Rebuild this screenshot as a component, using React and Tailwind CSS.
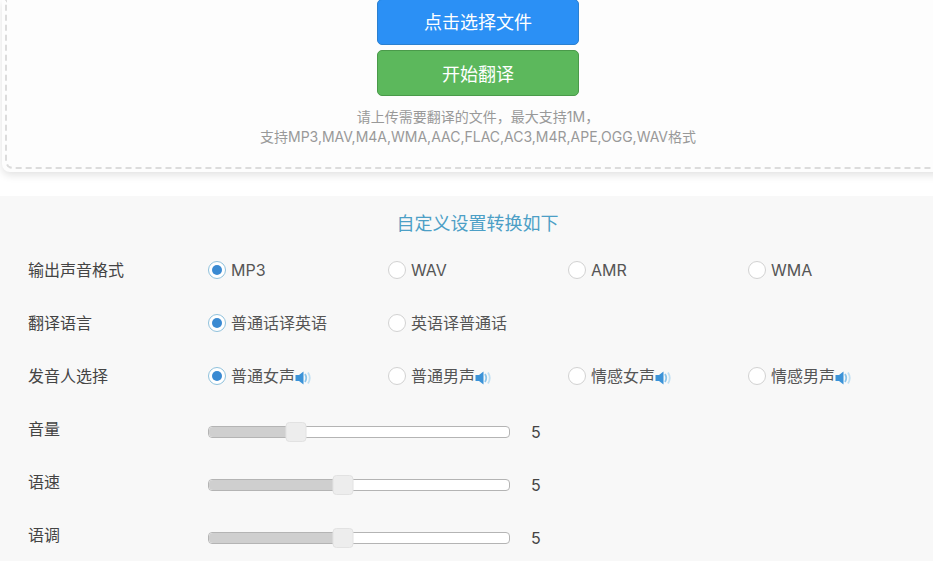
const FONT = "font-['Inter','Noto_Sans_CJK_SC',sans-serif]";

function Speaker() {
  return (
    <svg width="17" height="14" viewBox="0 0 17 14" className="mt-[4px] shrink-0">
      <path d="M0.5 4h3.5l4.5-3.5v13l-4.5-3.5h-3.5z" fill="#3c93d8" />
      <path d="M10 3q2.5 4 0 8" fill="none" stroke="#8cc4e8" strokeWidth="1.8" />
      <path d="M13 1.5q3.5 5.5 0 11" fill="none" stroke="#bfdff2" strokeWidth="1.8" />
    </svg>
  );
}

function Radio({ label, checked, sound }) {
  return (
    <div className="flex items-center">
      <span
        className={
          checked
            ? "flex h-[18px] w-[18px] shrink-0 items-center justify-center rounded-full border border-[#8fc1dc] bg-white"
            : "h-[18px] w-[18px] shrink-0 rounded-full border border-[#d2d2d2] bg-white"
        }
      >
        {checked && <span className="h-[10px] w-[10px] rounded-full bg-[#3a8ad2]" />}
      </span>
      <span className="ml-[5px] text-base leading-6 text-[#555]">{label}</span>
      {sound && <Speaker />}
    </div>
  );
}

function OptionRow({ title, options, sound }) {
  return (
    <div className="flex h-[53px] items-center pl-7">
      <div className="w-[180px] text-base text-[#444]">{title}</div>
      {options.map((opt, i) => (
        <div key={opt} className="w-[180px]">
          <Radio label={opt} checked={i === 0} sound={sound} />
        </div>
      ))}
    </div>
  );
}

function SliderRow({ title, value, percent }) {
  return (
    <div className="flex h-[53px] items-center pl-7 pt-[6px]">
      <div className="mb-[6px] w-[180px] text-base text-[#444]">{title}</div>
      <div className="relative h-3 w-[302px] rounded-[4px] border border-[#b4b4b4] bg-white">
        <div className="h-full rounded-l-[4px] bg-[#cfcfcf]" style={{ width: `${percent}%` }} />
        <div
          className="absolute top-[-5px] h-5 w-[21px] -translate-x-1/2 rounded-[4px] border border-[#e2e2e2] bg-[#ededed]"
          style={{ left: `${percent}%` }}
        />
      </div>
      <span className="ml-[21px] text-base text-[#444]">{value}</span>
    </div>
  );
}

export default function App() {
  return (
    <div className={`h-[561px] w-[933px] overflow-hidden bg-white ${FONT}`}>
      {/* upload card, top is scrolled off */}
      <div className="ml-[2px] h-[172px] w-[952px] rounded-b-lg bg-[#fdfdfd] px-[3px] pb-[3px] shadow-[0_3px_8px_rgba(0,0,0,0.12)]">
        <div className="flex h-full flex-col items-center rounded-b-lg border-x-2 border-b-2 border-dashed border-[#dcdcdc]">
          <button className="-mt-px h-[46px] w-[202px] rounded-[5px] border border-[#2b80d0] bg-[#2b90f5] pt-[2px] text-lg text-white">
            点击选择文件
          </button>
          <button className="mt-[5px] h-[46px] w-[202px] rounded-[5px] border border-[#4a9a4a] bg-[#5cb85c] pt-[3px] text-lg text-white">
            开始翻译
          </button>
          <p className="mt-[11px] text-center text-sm leading-[20px] text-[#999]">
            请上传需要翻译的文件，最大支持1M，
            <br />
            支持MP3,MAV,M4A,WMA,AAC,FLAC,AC3,M4R,APE,OGG,WAV格式
          </p>
        </div>
      </div>

      <div className="mt-6 h-[365px] bg-[#f8f8f8]">
        <h2 className="pl-[22px] pt-[14px] text-center text-lg leading-[27px] text-[#4c9fc6]">自定义设置转换如下</h2>
        <div className="mt-[6px]">
          <OptionRow title="输出声音格式" options={["MP3", "WAV", "AMR", "WMA"]} />
          <OptionRow title="翻译语言" options={["普通话译英语", "英语译普通话"]} />
          <OptionRow title="发音人选择" options={["普通女声", "普通男声", "情感女声", "情感男声"]} sound />
          <SliderRow title="音量" value="5" percent={29} />
          <SliderRow title="语速" value="5" percent={44.5} />
          <SliderRow title="语调" value="5" percent={44.5} />
        </div>
      </div>
    </div>
  );
}
